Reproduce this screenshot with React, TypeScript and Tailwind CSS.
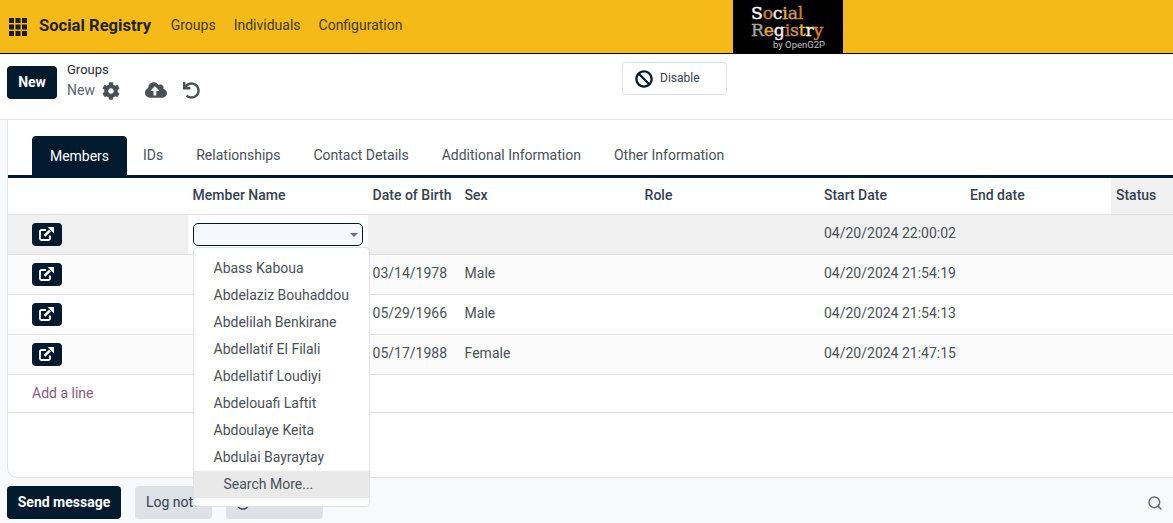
import React from "react";
import { FaCog, FaCloudUploadAlt, FaUndo, FaBan, FaRegClock } from "react-icons/fa";
import { Search } from "lucide-react";

const cols = "grid grid-cols-[179.6px_180px_92px_180px_179.4px_146px_146px_1fr]";
const names = ["Abass Kaboua","Abdelaziz Bouhaddou","Abdelilah Benkirane","Abdellatif El Filali","Abdellatif Loudiyi","Abdelouafi Laftit","Abdoulaye Keita","Abdulai Bayraytay"];
const tabs = ["IDs","Relationships","Contact Details","Additional Information","Other Information"];
const tabPad = ["ml-[16px]","ml-[33px]","ml-[33px]","ml-[33px]","ml-[33px]"];

function Cell({ children, className = "" }: { children?: React.ReactNode; className?: string }) {
  return <div className={`pl-[5px] pb-[2px] flex items-center ${className}`}>{children}</div>;
}

function OpenBtn() {
  return (
    <div className="pl-[24px] flex items-center">
      <div className="w-[30px] h-[23px] rounded-[4px] bg-[#021a2d] flex items-center justify-center text-white">
        <svg className="w-[16px] h-[15px] -mt-[2px]" viewBox="0 0 16 15" fill="none">
          <path d="M7 4H2.5A1.5 1.5 0 0 0 1 5.5v7A1.5 1.5 0 0 0 2.5 14h7a1.5 1.5 0 0 0 1.5-1.5V9.5" stroke="currentColor" strokeWidth="1.8" />
          <path d="M5.5 9.8 11 4.3" stroke="currentColor" strokeWidth="2.4" />
          <path d="M8.6 1H15v6.4z" fill="currentColor" />
        </svg>
      </div>
    </div>
  );
}

function Row({ dob, sex, start, bg }: { dob: string; sex: string; start: string; bg: string }) {
  return (
    <div className={`${cols} h-[40px] border-b border-[#dee2e6] text-[14px] text-[#495057] ${bg}`}>
      <OpenBtn />
      <Cell />
      <Cell>{dob}</Cell>
      <Cell>{sex}</Cell>
      <Cell />
      <Cell>{start}</Cell>
      <Cell />
      <Cell />
    </div>
  );
}

function Logo() {
  const a = (c: string, t: string) => <span style={{ color: c }}>{t}</span>;
  return (
    <div className="w-[110px] h-[53px] bg-black flex flex-col pl-[18px] pt-[4px] font-['DejaVu_Serif',serif]">
      <div className="text-[17.3px] leading-[18px] tracking-[-0.2px] [-webkit-text-stroke:0.4px]">
        {a("#ffffff","S")}{a("#d9803a","o")}{a("#f2f2f2","c")}{a("#f0b429","i")}{a("#c9955f","a")}{a("#d9772b","l")}
      </div>
      <div className="text-[17.3px] leading-[16px] tracking-[-0.2px] [-webkit-text-stroke:0.4px]">
        {a("#a3a3a3","R")}{a("#e8a930","e")}{a("#f2f2f2","g")}{a("#d9772b","i")}{a("#c9955f","s")}{a("#f0b429","t")}{a("#f2f2f2","r")}{a("#e0802c","y")}
      </div>
      <div className="text-[9.5px] leading-[11px] mt-[1px] ml-[22px] text-[#c4c4c4] font-['Roboto',sans-serif]">by OpenG2P</div>
    </div>
  );
}

export default function App() {
  return (
    <div className="relative w-[1173px] h-[523px] overflow-hidden bg-white font-['Roboto',sans-serif] text-[14px] text-[#374151]">
      {/* Navbar */}
      <header className="h-[54px] bg-[#f5ba18] border-b border-black flex items-center">
        <svg className="ml-[9px] w-[18px] h-[18px] shrink-0" viewBox="0 0 18 18" fill="#1a1a1a">
          {[0, 6.5, 13].flatMap((y) => [0, 6.5, 13].map((x) => <rect key={`${x}-${y}`} x={x} y={y} width="5" height="5" />))}
        </svg>
        <span className="ml-[12px] text-[16.6px] font-bold text-[#1f2327]">Social Registry</span>
        <nav className="flex ml-[19.5px] gap-[18px] text-[14px] text-[#3d3a1c] -mt-[2px]">
          <span>Groups</span>
          <span>Individuals</span>
          <span>Configuration</span>
        </nav>
        <div className="ml-[330.5px]"><Logo /></div>
      </header>

      {/* Control panel */}
      <div className="h-[66px] border-b border-[#e2e4e8] flex items-start">
        <button className="ml-[7px] mt-[12px] h-[33px] w-[50px] rounded-[4px] bg-[#021a2d] text-white text-[14px] font-bold">New</button>
        <div className="ml-[10px] mt-[9px] w-[78px]">
          <div className="text-[13px] leading-[14px] text-[#1f2937]">Groups</div>
          <div className="flex items-center mt-[3px] text-[14px] text-[#5a6270]">
            New
            <FaCog className="ml-[7px] w-[18px] h-[18px] text-[#495057]" />
          </div>
        </div>
        <FaCloudUploadAlt className="mt-[26px] w-[22px] h-[20px] text-[#495057]" />
        <FaUndo className="ml-[16px] mt-[28px] w-[17px] h-[17px] text-[#495057]" />
        <div className="ml-[422px] mt-[8px] w-[105px] h-[33px] border border-[#dee2e6] rounded-[4px] flex items-center pl-[12px] text-[12px] text-[#374151]">
          <FaBan className="w-[18px] h-[18px] text-[#021a2d]" />
          <span className="ml-[7px] -mt-[1px]">Disable</span>
        </div>
      </div>

      {/* Sheet */}
      <div className="h-[358px] bg-[#f8f9fa]">
        <div className="ml-[7px] h-[358px] bg-white border-l border-b border-[#dee2e6] rounded-bl-[10px]">
          <div className="pt-[16px] pl-[24px] h-[55px] flex items-end text-[14px] text-[#495057]">
            <div className="w-[95px] h-[39px] pt-[2px] bg-[#021a2d] text-white rounded-t-[4px] flex items-center justify-center">Members</div>
            {tabs.map((t, i) => (
              <div key={t} className={`${tabPad[i]} h-[39px] flex items-center -mt-[1px]`}>{t}</div>
            ))}
          </div>
          <div className="h-[3px] bg-[#021a2d]" />
          <div className={`${cols} h-[37px] border-b border-[#dee2e6] text-[14px] font-medium text-[#374151]`}>
            <Cell />
            <Cell>Member Name</Cell>
            <Cell>Date of Birth</Cell>
            <Cell>Sex</Cell>
            <Cell>Role</Cell>
            <Cell>Start Date</Cell>
            <Cell>End date</Cell>
            <Cell className="bg-[#f0f0f0]">Status</Cell>
          </div>
          {/* Editing row */}
          <div className={`${cols} h-[40px] border-b border-[#dee2e6] bg-[#f0f0f0] text-[14px] text-[#495057]`}>
            <OpenBtn />
            <div className="bg-white pl-[5px] flex items-center">
              <div className="w-[170px] h-[23px] rounded-[5px] border border-[#021a2d] bg-[#f5f8fe] relative">
                <span className="absolute right-[4px] top-[9px] w-0 h-0 border-l-[4px] border-r-[4px] border-t-[4px] border-l-transparent border-r-transparent border-t-[#71639e]" />
              </div>
            </div>
            <Cell /><Cell /><Cell />
            <Cell>04/20/2024 22:00:02</Cell>
            <Cell /><Cell />
          </div>
          <Row dob="03/14/1978" sex="Male" start="04/20/2024 21:54:19" bg="bg-[#fbfbfb]" />
          <Row dob="05/29/1966" sex="Male" start="04/20/2024 21:54:13" bg="bg-white" />
          <Row dob="05/17/1988" sex="Female" start="04/20/2024 21:47:15" bg="bg-[#fbfbfb]" />
          <div className="h-[38px] border-b border-[#dee2e6] pl-[24px] flex items-center text-[14px] text-[#875a7b]">Add a line</div>
        </div>
      </div>

      {/* Chatter */}
      <div className="h-[45px] bg-[#f8f9fa] flex items-start pl-[7px] pt-[8px] text-[14px]">
        <button className="w-[114px] h-[33px] rounded-[4px] bg-[#021a2d] text-white font-bold">Send message</button>
        <button className="ml-[14px] w-[77px] h-[33px] rounded-[4px] bg-[#dee2e6] text-[#374151] text-left pl-[11px]">Log note</button>
        <button className="ml-[14px] w-[97px] h-[33px] rounded-[4px] bg-[#dee2e6] text-[#374151] flex items-center pl-[10px] gap-[4px]">
          <FaRegClock className="w-[14px] h-[14px]" />
          Activities
        </button>
        <Search className="ml-auto mr-[10px] mt-[9px] w-[16px] h-[16px] text-[#5f6b7a]" strokeWidth={2.2} />
      </div>

      {/* Dropdown */}
      <div className="absolute left-[193px] top-[247px] w-[177px] h-[260px] bg-white border border-[#dee2e6] rounded-[4px] pt-[7px] text-[14px] text-[#495057]">
        {names.map((n) => (
          <div key={n} className="h-[27px] pl-[19.5px] flex items-center">{n}</div>
        ))}
        <div className="h-[27px] pl-[29.5px] flex items-center bg-[#e9e9e9]">Search More...</div>
      </div>
    </div>
  );
}
